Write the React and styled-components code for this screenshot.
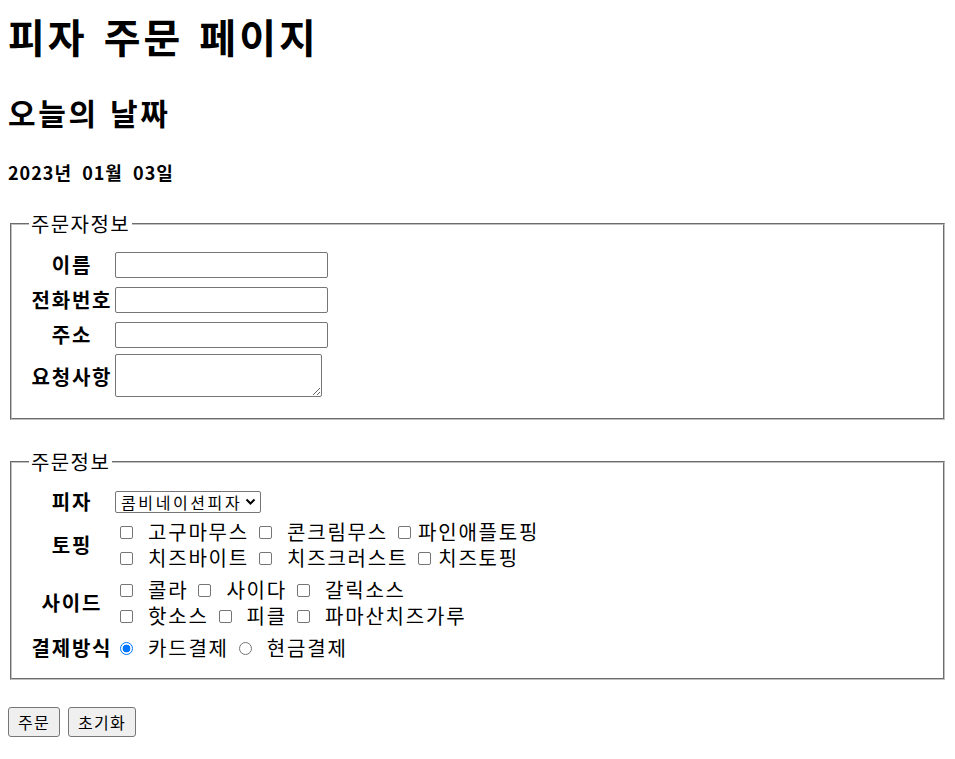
import React from 'react'
import styled, { createGlobalStyle } from 'styled-components'

const GlobalStyle = createGlobalStyle`
  body {
    margin: 0;
    background: #fff;
    color: #000;
    font-family: "Noto Sans CJK KR", "Noto Sans", sans-serif;
  }
`

const Page = styled.div`
  padding: 8px;
`

const Title = styled.h1`
  margin: 4px 0 0;
  font-size: 40px;
  line-height: 48px;
  font-weight: 700;
  letter-spacing: 3px;
  word-spacing: 4px;
`

const SubTitle = styled.h2`
  margin: 34px 0 0;
  font-size: 30px;
  line-height: 36px;
  font-weight: 700;
  letter-spacing: 2.6px;
  word-spacing: 2px;
`

const DateLine = styled.h4`
  margin: 31px 0 0;
  font-size: 18px;
  line-height: 22px;
  font-weight: 700;
  letter-spacing: 1px;
  word-spacing: 5px;
`

const Section = styled.fieldset`
  margin: ${(p) => p.$top}px 2px 0;
  padding: ${(p) => p.$padTop}px 12px ${(p) => p.$padBottom}px 17px;
  min-width: 0;
  border: 2px groove #c0c0c0;
`

const Legend = styled.legend`
  padding: 0 2px;
  font-size: 20px;
  line-height: 20px;
  letter-spacing: 1.4px;
`

const Fields = styled.div`
  display: grid;
  grid-template-columns: 84px auto;
  column-gap: 2px;
  row-gap: ${(p) => p.$gap}px;
  align-items: center;
  justify-items: start;
`

const Label = styled.div`
  justify-self: center;
  font-size: 20px;
  line-height: 20px;
  font-weight: 700;
  letter-spacing: 1.8px;
  margin-right: -1.8px;
`

const TextInput = styled.input`
  box-sizing: border-box;
  width: 213px;
  height: 26px;
  margin: 0;
  padding: 1px 2px;
  border: 1px solid #767676;
  border-radius: 2px;
`

const Memo = styled.textarea`
  box-sizing: border-box;
  width: 207px;
  height: 43px;
  margin: -3px 0 0;
  padding: 2px;
  border: 1px solid #767676;
  border-radius: 2px;
`

const SelectWrap = styled.div`
  position: relative;
  display: inline-flex;
`

const PizzaSelect = styled.select`
  appearance: none;
  box-sizing: border-box;
  width: 146px;
  height: 22px;
  margin: 0;
  padding: 0 20px 0 5px;
  border: 1px solid #767676;
  border-radius: 2px;
  background: #fff;
  color: #000;
  font-family: inherit;
  font-size: 16px;
  line-height: 20px;
  letter-spacing: 2.6px;
`

const Chevron = styled.svg`
  position: absolute;
  right: 5px;
  top: 7px;
  width: 11px;
  height: 8px;
  pointer-events: none;
`

const OptionGroup = styled.div`
  display: flex;
  flex-direction: column;
`

const OptionLine = styled.div`
  display: flex;
  align-items: center;
  height: 26px;
  padding-left: 5px;
  gap: 10px;
`

const OptionItem = styled.label`
  display: inline-flex;
  align-items: center;
`

const Box = styled.input`
  appearance: none;
  box-sizing: border-box;
  flex: none;
  width: 13px;
  height: 13px;
  margin: 0;
  border: 1px solid #767676;
  border-radius: ${(p) => (p.type === 'radio' ? '50%' : '2px')};
  background: #fff;

  &:checked {
    border-color: #0075ff;
    background: radial-gradient(circle, #0075ff 0 3.6px, #fff 4.2px);
  }
`

const OptionText = styled.span`
  margin-left: ${(p) => (p.$tight ? 7 : 15)}px;
  font-size: 20px;
  line-height: 26px;
  letter-spacing: 1.8px;
`

const ButtonRow = styled.div`
  display: flex;
  gap: 8px;
  margin-top: 27px;
`

const Button = styled.button`
  height: 30px;
  padding: 0 9px;
  border: 1px solid #767676;
  border-radius: 3px;
  background: #efefef;
  color: #000;
  font-family: inherit;
  font-size: 16px;
  line-height: 28px;
  letter-spacing: 1.3px;
`

const toppings = [
  [
    { name: '고구마무스' },
    { name: '콘크림무스' },
    { name: '파인애플토핑', tight: true }
  ],
  [
    { name: '치즈바이트' },
    { name: '치즈크러스트' },
    { name: '치즈토핑', tight: true }
  ]
]

const sides = [
  [{ name: '콜라' }, { name: '사이다' }, { name: '갈릭소스' }],
  [{ name: '핫소스' }, { name: '피클' }, { name: '파마산치즈가루' }]
]

const Options = ({ lines, group }) => (
  <OptionGroup>
    {lines.map((line, i) => (
      <OptionLine key={i}>
        {line.map((item) => (
          <OptionItem key={item.name}>
            <Box type='checkbox' name={group} value={item.name} />
            <OptionText $tight={item.tight}>{item.name}</OptionText>
          </OptionItem>
        ))}
      </OptionLine>
    ))}
  </OptionGroup>
)

const App = () => {
  return (
    <Page>
      <GlobalStyle />
      <Title>피자 주문 페이지</Title>
      <SubTitle>오늘의 날짜</SubTitle>
      <DateLine>2023년 01월 03일</DateLine>

      <form onSubmit={(e) => e.preventDefault()}>
        <Section $top={31} $padTop={18} $padBottom={21}>
          <Legend>주문자정보</Legend>
          <Fields $gap={9}>
            <Label>이름</Label>
            <TextInput type='text' name='name' />
            <Label>전화번호</Label>
            <TextInput type='tel' name='phone' />
            <Label>주소</Label>
            <TextInput type='text' name='address' />
            <Label>요청사항</Label>
            <Memo name='request' />
          </Fields>
        </Section>

        <Section $top={32} $padTop={19} $padBottom={17}>
          <Legend>주문정보</Legend>
          <Fields $gap={6}>
            <Label>피자</Label>
            <SelectWrap>
              <PizzaSelect name='pizza' defaultValue='combination'>
                <option value='combination'>콤비네이션피자</option>
                <option value='bulgogi'>불고기피자</option>
                <option value='pepperoni'>페퍼로니피자</option>
              </PizzaSelect>
              <Chevron viewBox='0 0 11 8'>
                <path d='M1.5 1.5 L5.5 5.5 L9.5 1.5' fill='none' stroke='#000' strokeWidth='2' />
              </Chevron>
            </SelectWrap>
            <Label>토핑</Label>
            <Options lines={toppings} group='topping' />
            <Label>사이드</Label>
            <Options lines={sides} group='side' />
            <Label>결제방식</Label>
            <OptionLine>
              <OptionItem>
                <Box type='radio' name='pay' value='card' defaultChecked />
                <OptionText>카드결제</OptionText>
              </OptionItem>
              <OptionItem>
                <Box type='radio' name='pay' value='cash' />
                <OptionText>현금결제</OptionText>
              </OptionItem>
            </OptionLine>
          </Fields>
        </Section>

        <ButtonRow>
          <Button type='submit'>주문</Button>
          <Button type='reset'>초기화</Button>
        </ButtonRow>
      </form>
    </Page>
  )
}

export default App
